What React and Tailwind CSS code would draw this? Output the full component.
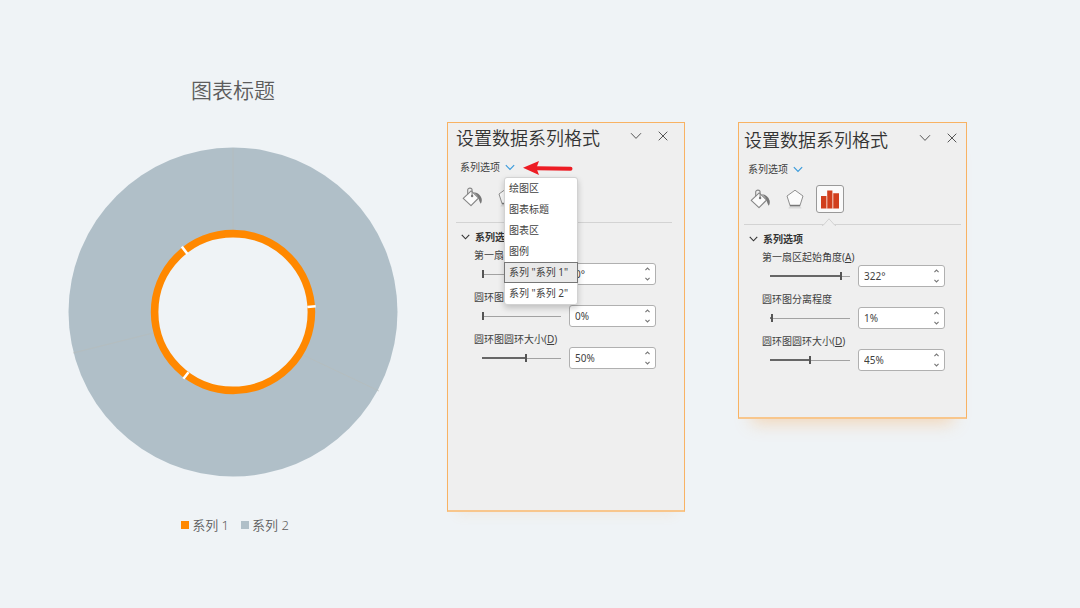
import { useState } from "react";

const SANS = "font-['Noto_Sans','Noto_Sans_CJK_SC',sans-serif]";

function Chevron({ className, up = false, thickness = 1 }) {
  return (
    <svg viewBox="0 0 12 8" className={className} fill="none" stroke="currentColor" strokeWidth={thickness} aria-hidden="true">
      <path d={up ? "M1 6.8 6 1.6l5 5.2" : "M1 1.2 6 6.4l5-5.2"} />
    </svg>
  );
}

function BucketIcon() {
  return (
    <svg viewBox="0 0 20 20" className="h-5 w-5" fill="none" aria-hidden="true">
      <path d="M9.2 3.8 1.2 11.3 9 18.6l7.6-7.6z" fill="#fbfbfb" stroke="#868686" strokeWidth="1.1" strokeLinejoin="round" />
      <path d="M5.7 7.2V3.1c0-2.6 4.4-2.6 4.4 0v5.2" stroke="#868686" strokeWidth="1.1" />
      <circle cx="10.1" cy="9" r="1.2" fill="#777" />
      <path d="M11.4 5.2c3.9.2 7.2 2.4 8.2 6.3.5 2.1.1 4-.9 5.3-1-1.6-1.5-3.2-2.1-5.3-.6-2.3-2.3-4.5-5.2-6.3z" fill="#777" />
    </svg>
  );
}

function PentagonIcon() {
  return (
    <svg viewBox="0 0 20 20" className="h-5 w-5" aria-hidden="true">
      <path d="M3.4 19.6c.2-1.4.7-2 1.8-2.2h9.6c1.1.2 1.6.8 1.8 2.2z" fill="#d9d9d9" />
      <path d="M10 1.2 18 7l-3 9.4H5L2 7z" fill="#fbfbfb" stroke="#909090" strokeWidth="1" strokeLinejoin="round" />
      <path d="M4.8 16.6h10.4" stroke="#777" strokeWidth="1.5" />
    </svg>
  );
}

function BarsIcon() {
  return (
    <svg viewBox="0 0 18 19" className="h-[19px] w-[18px]" fill="#d13f1d" aria-hidden="true">
      <path d="M0 6h5.4v12.5H0zM6.2.5h5.2v18H6.2zM12.2 3.2H18v15.3h-5.8z" />
      <path d="M5.8 6v12.5M11.8 3.2v15.3" stroke="#ee9a84" strokeWidth=".7" />
    </svg>
  );
}

function Setting({ id, label, hotkey, value, unit, percent }) {
  const [position, setPosition] = useState(percent);
  const [text, setText] = useState(value + unit);
  return (
    <div className="mb-1">
      <label htmlFor={id} className="block pl-[18px] text-[10px] leading-4 whitespace-nowrap">
        {label}
        {hotkey && <>(<u className="underline-offset-1">{hotkey}</u>)</>}
      </label>
      <div className="flex items-center gap-2 pr-4 pl-[26px]">
        <input
          type="range"
          aria-label={label}
          value={position}
          onChange={(e) => setPosition(Number(e.target.value))}
          className="h-2 min-w-0 flex-1 appearance-none bg-[linear-gradient(#666,#666),linear-gradient(#a2a2a2,#a2a2a2)] bg-left bg-no-repeat [&::-webkit-slider-thumb]:h-2 [&::-webkit-slider-thumb]:w-[2px] [&::-webkit-slider-thumb]:appearance-none [&::-webkit-slider-thumb]:bg-[#555]"
          style={{ backgroundSize: `${position}% 2px, 100% 1px` }}
        />
        <div className="flex h-[22px] w-[87px] rounded-[3px] border border-[#b0b0b0] bg-white">
          <input
            id={id}
            type="text"
            value={text}
            onChange={(e) => setText(e.target.value)}
            className="min-w-0 flex-1 bg-transparent pl-[5px] text-[10px] leading-4 outline-none"
          />
          <div className="flex w-[15px] flex-col items-center justify-between py-[3px] text-[#777]">
            <button type="button" aria-label="增加" className="block"><Chevron up className="block h-1 w-[5px]" thickness={2.6} /></button>
            <button type="button" aria-label="减少" className="block"><Chevron className="block h-1 w-[5px]" thickness={2.6} /></button>
          </div>
        </div>
      </div>
    </div>
  );
}

const TARGETS = ["绘图区", "图表标题", "图表区", "图例", '系列 "系列 1"', '系列 "系列 2"'];

function TargetMenu() {
  return (
    <ul role="listbox" aria-label="系列选项" className="absolute top-[18px] left-12 z-10 w-[74px] rounded-[3px] border border-[#d2d2d2] bg-white shadow-[0_3px_6px_rgba(0,0,0,0.2)]">
      {TARGETS.map((name, i) => (
        <li key={name} role="option" aria-selected={i === 4}>
          <button
            type="button"
            className={
              i === 4
                ? "-mx-px flex h-[21px] w-[74px] items-center border border-[#777] bg-[#e9e9e9] pl-1 text-[10px] whitespace-nowrap"
                : "flex h-[21px] w-full items-center pl-1 text-[10px] whitespace-nowrap"
            }
          >
            {name}
          </button>
        </li>
      ))}
    </ul>
  );
}

function FormatPane({ name, className, menuOpen = false, settings }) {
  return (
    <section aria-label={name} className={`min-w-0 border border-b-2 border-[#f8b263] border-b-[#f8c68c] bg-[#efefef] text-[#3f3f3f] ${className}`}>
      <header className="flex items-center pr-1">
        <h2 className="flex-1 text-[18px] leading-6 font-[350] whitespace-nowrap text-[#333]">设置数据系列格式</h2>
        <button type="button" aria-label="任务窗格选项" className="mb-1 text-[#555]"><Chevron className="h-2 w-3" /></button>
        <button type="button" aria-label="关闭" className="mb-1 ml-4 text-[#555]">
          <svg viewBox="0 0 10 10" className="h-[10px] w-[10px]" stroke="currentColor" aria-hidden="true"><path d="m.7.7 8.6 8.6M9.3.7.7 9.3" /></svg>
        </button>
      </header>

      <div className="relative mt-[9px] flex h-4 items-center pl-1">
        <button type="button" aria-haspopup="listbox" aria-expanded={menuOpen} className="flex items-center gap-[5px] text-[10px] leading-4 whitespace-nowrap">
          系列选项
          <Chevron className="h-[7px] w-[10px] text-[#3a9bdc]" thickness={1.4} />
        </button>
        {menuOpen && (
          <svg viewBox="0 0 50 14" className="mt-[2px] ml-2 h-[14px] w-[50px]" aria-hidden="true">
            <path d="M14 7.2 47.5 7.8" stroke="#ed1c24" strokeWidth="4" strokeLinecap="round" />
            <path d="M0 6.8 16 0l-2.6 7L16 14z" fill="#ed1c24" />
          </svg>
        )}
        {menuOpen && <TargetMenu />}
      </div>

      <div className="mt-2 flex h-10 items-start gap-2 border-b border-[#d3d3d3] pl-[2px]">
        <button type="button" aria-label="填充与线条" className="flex h-7 w-[27px] items-center justify-center"><BucketIcon /></button>
        <button type="button" aria-label="效果" className="flex h-7 w-[27px] items-center justify-center"><PentagonIcon /></button>
        {!menuOpen && (
          <div className="relative">
            <button type="button" aria-label="系列选项" className="flex h-7 w-7 items-center justify-center rounded-[3px] border border-[#999] bg-[#fafafa]"><BarsIcon /></button>
            <svg viewBox="0 0 14 8" className="absolute top-[33px] left-[6px] h-2 w-[14px]" fill="#efefef" stroke="#d3d3d3" aria-hidden="true"><path d="M0 7.5h1L7 .8l6 6.7h1" /></svg>
          </div>
        )}
      </div>

      <h3 className="mt-[6px] flex items-center gap-[5px] pl-[5px] text-[10px] leading-4 font-bold whitespace-nowrap text-[#333]">
        <Chevron className="h-[6px] w-[9px]" thickness={1.5} />
        系列选项
      </h3>
      <div className="mt-[2px]">
        {settings.map((s) => <Setting key={s.id} {...s} />)}
      </div>
    </section>
  );
}

function DoughnutChart() {
  return (
    <figure className="min-w-0 text-[#5c5c5c]">
      <h1 className="text-center text-[21px] leading-7 font-[350]">图表标题</h1>
      <svg viewBox="0 0 330 330" className="mt-[43px] block w-full" role="img" aria-label="图表标题">
        <circle cx="165" cy="165" r="164.5" fill="#b0bfc8" />
        <path d="M165 83V1M85 186 5 206M235 208 311 244" stroke="#b9bcb9" strokeWidth=".8" opacity=".7" />
        <circle cx="165" cy="165" r="78.4" fill="#eff3f6" stroke="#ff8800" strokeWidth="7.6" />
        <path d="M119.5 107 113.8 99.6M239.3 160 247.7 159.2M120.5 225.3 115.4 231.8" stroke="#fff" strokeWidth="2.6" />
      </svg>
      <figcaption className="mt-[38px] flex items-center justify-center gap-3 pl-1 text-[13px] leading-5 font-[350]">
        <span className="flex items-center gap-[3px]"><i className="h-2 w-2 bg-[#ff8800]" />系列 1</span>
        <span className="flex items-center gap-[3px]"><i className="h-2 w-2 bg-[#b0bfc8]" />系列 2</span>
      </figcaption>
    </figure>
  );
}

export default function App() {
  return (
    <main className={`grid min-h-screen grid-cols-[330fr_287fr_282fr] items-start bg-[#eff3f6] pt-[76px] pr-[113px] pb-16 pl-[68px] ${SANS}`}>
      <DoughnutChart />
      <FormatPane
        name="系列 1 格式"
        menuOpen
        className="mt-[46px] ml-[49px] min-h-[390px] pt-[3px] pr-3 pl-2 shadow-[0_12px_12px_-10px_rgba(250,170,80,0.12)]"
        settings={[
          { id: "first-angle", label: "第一扇区起始角度", hotkey: "A", value: 0, unit: "°", percent: 0 },
          { id: "first-explosion", label: "圆环图分离程度", value: 0, unit: "%", percent: 0 },
          { id: "first-hole", label: "圆环图圆环大小", hotkey: "D", value: 50, unit: "%", percent: 56 },
        ]}
      />
      <FormatPane
        name="系列 2 格式"
        className="mt-[46px] ml-[53px] min-h-[297px] pt-[5px] pr-[5px] pl-[5px] shadow-[0_18px_16px_-14px_rgba(250,160,70,0.35)]"
        settings={[
          { id: "second-angle", label: "第一扇区起始角度", hotkey: "A", value: 322, unit: "°", percent: 90 },
          { id: "second-explosion", label: "圆环图分离程度", value: 1, unit: "%", percent: 1 },
          { id: "second-hole", label: "圆环图圆环大小", hotkey: "D", value: 45, unit: "%", percent: 50 },
        ]}
      />
    </main>
  );
}
